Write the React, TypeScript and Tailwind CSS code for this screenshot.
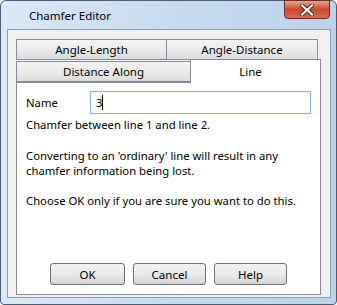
// ─── CHAMFER EDITOR ────────────────────────────────────────────────────────
// Win7-style modal dialog with two rows of tabs and OK / Cancel / Help.

const FONT = { fontFamily: '"Noto Sans", "Liberation Sans", sans-serif' };

function Tab({ label, className = "" }: { label: string; className?: string }) {
  return (
    <div
      className={`flex items-center justify-center h-[21px] border border-[#898c95] bg-gradient-to-b from-[#f3f3f3] via-[#ebebeb] to-[#dcdcdc] text-[11.5px] text-black ${className}`}
    >
      {label}
    </div>
  );
}

function Button({ label, width }: { label: string; width: string }) {
  return (
    <button
      className={`${width} h-[22px] rounded-[3px] border border-[#707070] bg-gradient-to-b from-[#f2f2f2] via-[#ebebeb] to-[#d3d3d3] text-[11.5px] text-black`}
    >
      {label}
    </button>
  );
}

export default function App() {
  return (
    <div style={FONT} className="w-[337px] h-[305px] bg-white">
      <div className="w-[337px] h-[305px] flex flex-col rounded-t-[6px] rounded-b-[4px] border border-[#4d5d70] bg-gradient-to-r from-[#dce8f5] via-[#c7dbef] to-[#bad2ea]">
        {/* ─── TITLE BAR ───────────────────────────────────────────── */}
        <div className="h-[28px] flex items-start justify-between pl-[28px] pr-[6px]">
          <span className="mt-[6px] text-[11.5px] text-black">Chamfer Editor</span>
          <div className="w-[46px] h-[19px] -mt-px rounded-b-[4px] border border-[#6e2a22] bg-gradient-to-b from-[#e8a392] via-[#c9462f] to-[#d5694f] flex items-center justify-center">
            <svg width="14" height="12" viewBox="0 0 14 12">
              <path
                d="M2 1.5 L12 10.5 M12 1.5 L2 10.5"
                stroke="#3a3a3a"
                strokeWidth="4"
                strokeLinecap="square"
              />
              <path
                d="M2 1.5 L12 10.5 M12 1.5 L2 10.5"
                stroke="#ffffff"
                strokeWidth="2"
                strokeLinecap="square"
              />
            </svg>
          </div>
        </div>

        {/* ─── CLIENT AREA ─────────────────────────────────────────── */}
        <div className="ml-[6px] mr-[5px] h-[269px] border border-[#8e9cad] bg-[#f0f0f0] pl-[8px] pr-[9px] pt-[9px]">
          {/* back row of tabs */}
          <div className="flex w-[302px]">
            <Tab label="Angle-Length" className="w-[151px]" />
            <Tab label="Angle-Distance" className="w-[152px] -ml-px" />
          </div>
          {/* front row of tabs */}
          <div className="flex -mt-px items-end">
            <Tab label="Distance Along" className="w-[175px]" />
            <div className="relative z-10 -ml-px -mb-px w-[131px] h-[24px] border border-b-0 border-[#898c95] bg-white flex items-center justify-center pr-[10px] text-[11.5px] text-black">
              Line
            </div>
          </div>

          {/* ─── TAB PANEL ─────────────────────────────────────────── */}
          <div className="w-[305px] h-[213px] border border-[#898c95] bg-white flex flex-col px-[9px] text-[11.3px] text-black leading-[15px] whitespace-nowrap">
            <div className="flex items-center mt-[8px]">
              <span className="w-[64px]">Name</span>
              <div className="w-[221px] h-[23px] border border-[#7eb4ea] flex items-center pl-[5px]">
                <span>3</span>
                <span className="w-px h-[15px] bg-black" />
              </div>
            </div>
            <p className="mt-[3px]">Chamfer between line 1 and line 2.</p>
            <p className="mt-[16px]">
              Converting to an 'ordinary' line will result in any
              <br />
              chamfer information being lost.
            </p>
            <p className="mt-[15px]">Choose OK only if you are sure you want to do this.</p>

            <div className="mt-auto mb-[9px] flex justify-center gap-[8px]">
              <Button label="OK" width="w-[75px]" />
              <Button label="Cancel" width="w-[73px]" />
              <Button label="Help" width="w-[73px]" />
            </div>
          </div>
        </div>
      </div>
    </div>
  );
}
